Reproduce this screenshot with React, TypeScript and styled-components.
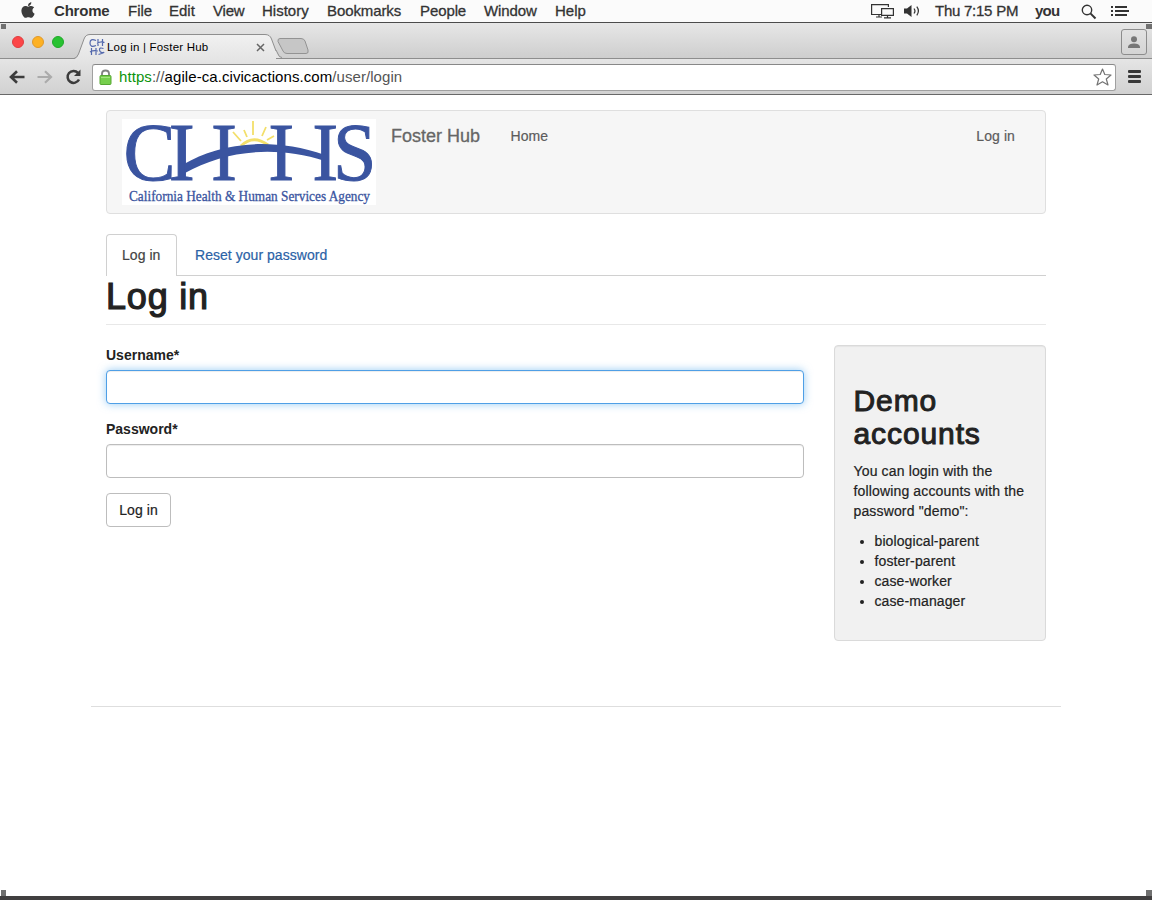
import React from 'react';
import styled, { createGlobalStyle } from 'styled-components';
import { FaApple } from 'react-icons/fa';

const Global = createGlobalStyle`
  * { box-sizing: border-box; }
  html, body { margin: 0; padding: 0; background: #fff; }
  body {
    font-family: "Liberation Sans", Arial, sans-serif;
    font-size: 14px; line-height: 20px; color: #222;
    overflow: hidden;
  }
`;

const Screen = styled.div`
  position: relative;
  width: 1152px; height: 900px;
  display: flex; flex-direction: column;
  overflow: hidden; background: #fff;
`;

const MenuBar = styled.header`
  height: 23px; flex: none;
  display: flex; align-items: center;
  background: #fbfbfb; border-bottom: 1px solid #4c4c4c;
  color: #333; font-size: 15px; line-height: 22px;
`;
const AppleMark = styled.span`
  width: 54px; padding: 0 0 2px 19px; height: 22px;
  display: flex; align-items: center; color: #3c3c3c;
`;
const MenuItem = styled.span<{ $w: number; $bold?: boolean; $ls?: number }>`
  width: ${p => p.$w}px; flex: none; white-space: nowrap;
  font-weight: ${p => (p.$bold ? 700 : 400)};
  letter-spacing: ${p => p.$ls ?? 0}px;
  -webkit-text-stroke: ${p => (p.$bold ? 0 : 0.3)}px #333;
`;
const StatusArea = styled.div`
  margin-left: auto; display: flex; align-items: center; height: 22px;
  svg { display: block; flex: none; }
`;

const TabStrip = styled.div`
  height: 36px; flex: none; display: flex; align-items: flex-end;
  background: linear-gradient(#e7e7e7, #cecece);
  border-bottom: 1px solid #8e8e8e;
  svg { display: block; flex: none; }
`;
const Lights = styled.div`
  width: 74px; height: 35px; padding: 13px 0 0 12px; flex: none;
  display: flex; gap: 8px;
`;
const Light = styled.i<{ $c: string; $b: string }>`
  width: 12px; height: 12px; border-radius: 50%;
  background: ${p => p.$c}; border: 1px solid ${p => p.$b};
`;
const TabShape = styled.div`
  position: relative; width: 202px; height: 36px; margin-bottom: -1px; flex: none;
`;
const TabArt = styled.svg`
  position: absolute; left: 0; top: 0;
`;
const TabContent = styled.div`
  position: relative; display: flex; align-items: center;
  height: 18px; margin: 15px 0 0 15px; color: #000; font-size: 11.5px;
`;
const TabTitle = styled.span`
  width: 151px; padding-left: 2px; white-space: nowrap; letter-spacing: 0.2px;
`;
const ProfileButton = styled.div`
  width: 26px; height: 26px; margin: 0 5px 3px auto;
  border: 1px solid #8c8c8c; border-radius: 3px;
  background: linear-gradient(#e2e2e2, #d4d4d4);
  display: flex; align-items: center; justify-content: center;
`;

const Toolbar = styled.div`
  height: 36px; flex: none; display: flex; align-items: center;
  background: linear-gradient(#e5e5e5, #d1d1d1);
  border-bottom: 1px solid #686868;
  svg { display: block; flex: none; }
`;
const NavButtons = styled.div`
  width: 92px; height: 35px; padding-left: 9px; display: flex; align-items: center; gap: 12px; flex: none;
`;
const Omnibox = styled.div`
  width: 1024px; height: 27px; margin-top: 1px;
  border: 1px solid #a0a0a0; border-top-color: #888; border-radius: 3px; background: #fff;
  display: flex; align-items: center; padding: 0 3px 0 6px;
`;
const Address = styled.div`
  flex: 1; padding-left: 7px; font-size: 15px; line-height: 24px; white-space: nowrap; color: #555;
  letter-spacing: 0.07px;
`;
const Scheme = styled.span`color: #0c930c;`;
const Host = styled.span`color: #000;`;
const MenuLines = styled.div`
  width: 13px; margin-left: 12px; display: flex; flex-direction: column; gap: 2px;
`;
const Line = styled.i`height: 3px; border-radius: 1px; background: #383838;`;

const Page = styled.main`
  width: 940px; margin: 15px auto 0; flex: none;
`;
const Navbar = styled.nav`
  height: 104px; padding: 8px 15px; display: flex;
  background: #f6f6f6; border: 1px solid #dfdfdf; border-radius: 4px;
`;
const Logo = styled.svg`display: block; width: 254px; height: 86px; background: #fff; overflow: visible;`;
const Brand = styled.span`
  margin-left: 15px; padding-top: 7px; width: 119.5px; font-size: 18px; color: #666;
  -webkit-text-stroke: 0.3px #666; white-space: nowrap;
`;
const NavLink = styled.span<{ $right?: boolean }>`
  padding-top: 7px; color: #5c5c5c; -webkit-text-stroke: 0.2px #5c5c5c;
  letter-spacing: 0.1px;
  margin-left: ${p => (p.$right ? 'auto' : '0')};
  margin-right: ${p => (p.$right ? '15px' : '0')};
`;
const Tabs = styled.div`
  margin-top: 20px; height: 42px; display: flex; border-bottom: 1px solid #d0d0d0;
`;
const Tab = styled.div<{ $active?: boolean }>`
  height: 42px; padding: 10px 15px; margin-right: 2px; letter-spacing: 0.04px;
  ${p => (p.$active ? 'width: 71px;' : '')}
  color: ${p => (p.$active ? '#444' : '#2b62a6')};
  -webkit-text-stroke: 0.2px currentColor;
  border: 1px solid ${p => (p.$active ? '#d0d0d0' : 'transparent')};
  border-bottom: 0; border-radius: 4px 4px 0 0;
  background: ${p => (p.$active ? '#fff' : 'transparent')};
`;
const Title = styled.h1`
  margin: 0; height: 49px; font-size: 36px; line-height: 41px; font-weight: 400;
  letter-spacing: 0.8px; -webkit-text-stroke: 1.2px #222; border-bottom: 1px solid #e8e8e8;
`;
const Columns = styled.div`
  display: flex; justify-content: space-between; align-items: flex-start; margin-top: 20px;
`;
const Form = styled.form`width: 698px;`;
const Label = styled.label`
  display: block; font-weight: 700; margin-bottom: 5px; letter-spacing: 0;
`;
const Field = styled.input<{ $focus?: boolean }>`
  display: block; width: 100%; height: 34px; margin-bottom: 15px; outline: none;
  border: 1px solid ${p => (p.$focus ? '#4f9fe6' : '#bdbdbd')}; border-radius: 4px; background: #fff;
  box-shadow: ${p => (p.$focus
    ? 'inset 0 1px 1px rgba(0,0,0,.075), 0 0 8px rgba(82,168,236,.6)'
    : 'inset 0 1px 1px rgba(0,0,0,.075)')};
`;
const Submit = styled.button`
  width: 65px; height: 34px; padding: 0; border: 1px solid #bdbdbd; border-radius: 4px;
  background: #fff; color: #222; font: 14px/20px "Liberation Sans", Arial, sans-serif;
  letter-spacing: 0.1px; -webkit-text-stroke: 0.2px #222;
`;
const Aside = styled.aside`
  width: 212px; height: 296px; padding: 38px 10px 0 18.5px;
  background: #f1f1f1; border: 1px solid #dadada; border-radius: 4px;
  box-shadow: inset 0 1px 1px rgba(0,0,0,.05);
  -webkit-text-stroke: 0.2px #222;
`;
const AsideTitle = styled.h2`
  margin: 0 0 11px; font-size: 30px; line-height: 33px; font-weight: 400;
  letter-spacing: 0.9px; -webkit-text-stroke: 1px #222;
`;
const Para = styled.p`margin: 0 0 10px; white-space: nowrap; letter-spacing: 0.15px;`;
const Accounts = styled.ul`margin: 0; padding-left: 21px; letter-spacing: 0.1px;`;
const Divider = styled.div`
  width: 970px; height: 1px; margin: 65px 0 0 -15px; background: #dedede;
`;

const BottomEdge = styled.footer`
  height: 4px; flex: none; margin-top: auto; background: #413f40;
`;
const Handle = styled.i<{ $right?: boolean; $bottom?: boolean }>`
  position: absolute; width: ${p => (p.$right ? 6 : 5)}px; height: ${p => (p.$bottom ? 6 : 5)}px; background: #707070;
  ${p => (p.$right ? 'right: 0;' : 'left: 1px;')}
  ${p => (p.$bottom ? 'bottom: 4px;' : 'top: 24px;')}
`;

const menus: [string, number, number][] = [
  ['File', 41, 0], ['Edit', 44, 0], ['View', 49, -0.2], ['History', 65, 0],
  ['Bookmarks', 93, -0.1], ['People', 64, -0.1], ['Window', 71, -0.1], ['Help', 40, 0],
];

const AgencyLogo = () => (
  <Logo viewBox="0 0 254 86">
    <g stroke="#f3df6a" strokeWidth="1.8" fill="none">
      <path d="M111 13 L119 22 M122 11 L125 18 M131 2 V16 M144 8 L140 17 M152 17 L145 21" />
      <path d="M119 27 Q131 15 146 26" strokeWidth="3" />
    </g>
    <g fill="#3a54a0" stroke="#3a54a0" strokeWidth="1" fontFamily="'Liberation Serif', serif">
      <text transform="scale(.94 1)" x="1.500 49.700 94.700 155.500 202.300 224.500" y="60.500" fontSize="83">CIIIIS</text>
      <path d="M62 45 C94 26 145 16 203 36 V42 C150 25 100 33 63 54 Z" stroke="none" />
    </g>
    <text x="7" y="82" fill="#3a54a0" stroke="#3a54a0" strokeWidth="0.3" fontFamily="'Liberation Serif', serif" fontSize="14" textLength="241" lengthAdjust="spacingAndGlyphs">
      California Health &amp; Human Services Agency
    </text>
  </Logo>
);

export default function App() {
  return (
    <Screen>
      <Global />
      <MenuBar>
        <AppleMark><FaApple size={18} /></AppleMark>
        <MenuItem $w={74} $bold $ls={-0.2}>Chrome</MenuItem>
        {menus.map(([name, w, ls]) => <MenuItem key={name} $w={w} $ls={ls}>{name}</MenuItem>)}
        <StatusArea>
          <svg width="64" height="22" viewBox="0 0 64 22" fill="none" stroke="#333" strokeWidth="1.2">
            <path d="M10 14.5H.6V4.6H17.4V7M5 17H11M8 14.5V17" />
            <path d="M10.6 8.6H22.4V15.4H10.6ZM16.5 15.4V17.4M13 17.8H20" />
            <path d="M33 8.5H36L40.5 5V17L36 13.5H33Z" fill="#333" stroke="none" />
            <path d="M43 8.5Q45 11 43 13.5M45.8 6.7Q49 11 45.8 15.3" />
          </svg>
          <MenuItem $w={100} $ls={-0.25}>Thu 7:15 PM</MenuItem>
          <MenuItem $w={46} $bold $ls={-0.8}>you</MenuItem>
          <svg width="71" height="22" viewBox="0 0 71 22" fill="none" stroke="#333" strokeWidth="1.4">
            <circle cx="6" cy="10" r="4.7" /><path d="M9.4 13.4L14.5 18.5" strokeWidth="2" />
            <path d="M30 7H32M30 11H32M30 15H32M34 7H46M34 11H48M34 15H46" strokeWidth="1.8" />
          </svg>
        </StatusArea>
      </MenuBar>

      <TabStrip>
        <Lights>
          <Light $c="#fc4648" $b="#df3e40" /><Light $c="#fdb124" $b="#e0992b" /><Light $c="#28c231" $b="#20a92a" />
        </Lights>
        <TabShape>
          <TabArt width="202" height="36" viewBox="0 0 202 36">
            <defs><linearGradient id="tab" x1="0" y1="0" x2="0" y2="1"><stop stopColor="#f1f1f1" /><stop offset="1" stopColor="#e5e5e5" /></linearGradient></defs>
            <path d="M0 36 Q3 35 4.5 31 L10 16 Q11.5 11.5 16 11.5 H191 Q196 11.5 197.5 16 L202 28 V36Z" fill="url(#tab)" />
            <path d="M0 35.5 Q3 35 4.5 31 L10 16 Q11.5 11.5 16 11.5 H191 Q196 11.5 197.5 16 L202 28" fill="none" stroke="#8e8e8e" />
          </TabArt>
          <TabContent>
            <svg width="16" height="18" viewBox="0 0 16 18" fill="none" stroke="#5469ad" strokeWidth="1.2">
              <path d="M7 2.500Q1 0 1 5T7 7.500M9 1V8M13.500 1V8M8 5.500Q12 3 15.500 4.500M2.500 10V17M7 10V17M1 14Q4 12 9 13M14.500 10.500Q10 9 10.500 12T14 14.500T9.500 16.500" />
            </svg>
            <TabTitle>Log in | Foster Hub</TabTitle>
            <svg width="9" height="9" viewBox="0 0 9 9" stroke="#666" strokeWidth="1.5"><path d="M1 1L8 8M8 1L1 8" /></svg>
          </TabContent>
        </TabShape>
        <svg width="36" height="36" viewBox="0 0 36 36">
          <path d="M0 28L2 33Q3 35.500 6 35.500V36H0Z" fill="#e5e5e5" />
          <path d="M0 28L2 32Q3 35.500 6 35.500" fill="none" stroke="#8e8e8e" />
          <path d="M2 19.500Q1.500 16.500 4 16.500H25Q28 16.500 29 19L32 28Q33 31.500 30 31.500H11Q8 31.500 7 29Z" fill="#c6c6c6" stroke="#939393" />
        </svg>
        <ProfileButton>
          <svg width="12" height="12" viewBox="0 0 12 12" fill="#777"><circle cx="6" cy="3.200" r="3" /><path d="M0 12V10.500Q1 7.600 6 7.600T12 10.500V12Z" /></svg>
        </ProfileButton>
      </TabStrip>

      <Toolbar>
        <NavButtons>
          <svg width="16" height="14" viewBox="0 0 16 14" fill="none" stroke="#3c3c3c" strokeWidth="2.600"><path d="M15.500 7H2.500M8 1.300L2 7L8 12.700" /></svg>
          <svg width="16" height="14" viewBox="0 0 16 14" fill="none" stroke="#ababab" strokeWidth="2.200"><path d="M.5 7H13.500M8 1.300L14 7L8 12.700" /></svg>
          <svg width="17" height="16" viewBox="0 0 17 16" fill="none" stroke="#3c3c3c" strokeWidth="2.500"><path d="M13 3.800A6 6 0 1 0 14 10.500" /><path d="M15.500 .5V7H9Z" fill="#3c3c3c" stroke="none" /></svg>
        </NavButtons>
        <Omnibox>
          <svg width="13" height="16" viewBox="0 0 13 16">
            <path d="M3 8V4.500Q3 1.500 6.500 1.500T10 4.500V8" fill="none" stroke="#818181" strokeWidth="1.800" />
            <rect x="1" y="6.500" width="11" height="9" rx="1" fill="#76cf4d" stroke="#56a633" />
            <path d="M2 8.500H11" stroke="#a4e37f" />
          </svg>
          <Address><Scheme>https</Scheme>://<Host>agile-ca.civicactions.com</Host>/user/login</Address>
          <svg width="19" height="18" viewBox="0 0 19 18" fill="#fff" stroke="#737373" strokeWidth="1.200" strokeLinejoin="round"><path d="M9.500 1L11.800 6.500L18 7L13.300 11L15 17L9.500 13.800L4 17L5.700 11L1 7L7.200 6.500Z" /></svg>
        </Omnibox>
        <MenuLines><Line /><Line /><Line /></MenuLines>
      </Toolbar>

      <Page>
        <Navbar>
          <AgencyLogo />
          <Brand>Foster Hub</Brand>
          <NavLink>Home</NavLink>
          <NavLink $right>Log in</NavLink>
        </Navbar>
        <Tabs><Tab $active>Log in</Tab><Tab>Reset your password</Tab></Tabs>
        <Title>Log in</Title>
        <Columns>
          <Form>
            <Label>Username*</Label>
            <Field $focus />
            <Label>Password*</Label>
            <Field type="password" />
            <Submit type="button">Log in</Submit>
          </Form>
          <Aside>
            <AsideTitle>Demo<br />accounts</AsideTitle>
            <Para>You can login with the<br />following accounts with the<br />password "demo":</Para>
            <Accounts>
              <li>biological-parent</li><li>foster-parent</li><li>case-worker</li><li>case-manager</li>
            </Accounts>
          </Aside>
        </Columns>
        <Divider />
      </Page>
      <BottomEdge />
      <Handle /><Handle $right /><Handle $bottom /><Handle $right $bottom />
    </Screen>
  );
}
